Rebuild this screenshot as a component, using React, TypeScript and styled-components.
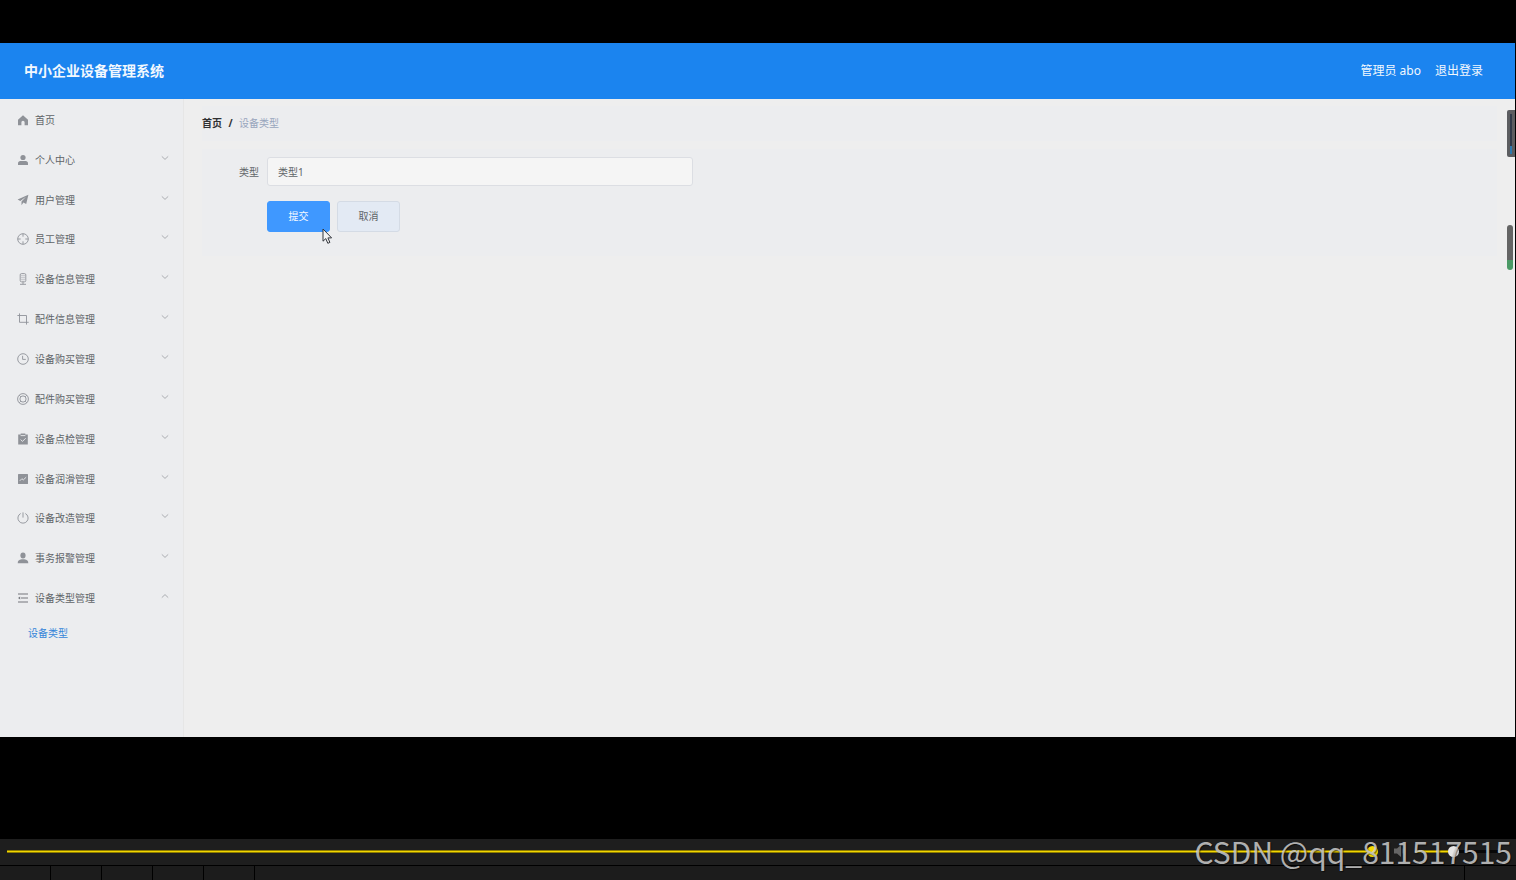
import React, { useState } from 'react';
import styled, { createGlobalStyle } from 'styled-components';

const GlobalStyle = createGlobalStyle`
  *, *::before, *::after { box-sizing: border-box; }
  body {
    margin: 0;
    background: #000;
    font-family: "Noto Sans", "Noto Sans CJK SC", sans-serif;
    font-size: 10px;
    line-height: 16px;
    color: #606468;
  }
  a { color: inherit; text-decoration: none; }
  button, input { font: inherit; color: inherit; margin: 0; }
  ul, ol { list-style: none; margin: 0; padding: 0; }
`;

const Page = styled.div`
  position: relative;
  min-height: 100vh;
  display: flex;
  flex-direction: column;
`;

const Stage = styled.div`
  flex: 1;
  display: flex;
  padding: 43px 1px 102px 0;
`;

const Screen = styled.div`
  position: relative;
  flex: 1;
  display: flex;
  flex-direction: column;
  background: #eeeeee;
`;

const Header = styled.header`
  height: 56px;
  flex: none;
  display: flex;
  align-items: center;
  justify-content: space-between;
  padding: 0 32px 0 24px;
  background: #1b84ef;
  color: #f2f8fe;
`;

const Title = styled.h1`
  margin: 0;
  font-size: 14px;
  line-height: 20px;
  font-weight: 700;
`;

const Account = styled.div`
  display: flex;
  gap: 14px;
  font-size: 12px;
`;

const Body = styled.div`
  flex: 1;
  display: flex;
`;

const Sidebar = styled.nav`
  width: 184px;
  flex: none;
  background: #ecedef;
  border-right: 1px solid #e6e6e6;
`;

const Menu = styled.ul`
  display: grid;
  grid-auto-rows: 1fr;
  height: 519px;
  padding-top: 1px;
`;

const MenuItem = styled.li`
  display: flex;
`;

const MenuButton = styled.button`
  flex: 1;
  display: flex;
  align-items: center;
  gap: 6px;
  padding: 0 14px 0 17px;
  border: 0;
  background: none;
  text-align: left;
  cursor: pointer;
`;

const MenuLabel = styled.span`
  flex: 1;
`;

const MenuIcon = styled.svg`
  width: 12px;
  height: 12px;
  flex: none;
  color: #8f9298;
`;

const Chevron = styled.svg<{ $open?: boolean }>`
  width: 8px;
  height: 8px;
  margin-bottom: 4px;
  color: #9a9da2;
  transform: ${(p) => (p.$open ? 'rotate(180deg)' : 'none')};
`;

const SubLink = styled.a`
  display: block;
  padding: 7px 28px;
  color: #3585d9;
`;

const Content = styled.main`
  flex: 1;
  display: flex;
  flex-direction: column;
  gap: 8px;
  padding: 7px 18px 0;
`;

const Breadcrumb = styled.nav`
  display: flex;
  gap: 6px;
  height: 35px;
  padding-bottom: 2px;
  align-items: center;
  background: #ecedef;
  color: #98a5bd;
`;

const HomeCrumb = styled.a`
  font-weight: 700;
  color: #303133;
`;

const Slash = styled.span`
  width: 5px;
  text-align: center;
  font-weight: 700;
  color: #303133;
`;

const Form = styled.form`
  display: flex;
  flex-direction: column;
  gap: 15px;
  padding: 8px 0 24px;
  background: #ecedef;
`;

const Field = styled.div`
  display: flex;
  align-items: center;
`;

const FieldLabel = styled.label`
  width: 65px;
  padding-right: 8px;
  text-align: right;
`;

const TextInput = styled.input`
  width: 426px;
  height: 29px;
  padding: 0 10px;
  border: 1px solid #dcdee3;
  border-radius: 3px;
  background: #f5f5f5;
  outline: none;
`;

const Actions = styled.div`
  display: flex;
  gap: 7px;
  padding-left: 65px;
`;

const ActionButton = styled.button<{ $primary?: boolean }>`
  width: 63px;
  height: 31px;
  padding: 0 0 2px;
  border: 1px solid ${(p) => (p.$primary ? '#3f98ff' : '#d4dbe5')};
  border-radius: 3px;
  background: ${(p) => (p.$primary ? '#3f98ff' : '#e3eaf4')};
  color: ${(p) => (p.$primary ? '#f4f9ff' : '#606468')};
  cursor: pointer;
`;

const Gauge = styled.div<{ $top: number; $wide?: boolean }>`
  position: absolute;
  top: ${(p) => p.$top}px;
  right: ${(p) => (p.$wide ? 0 : 2)}px;
  width: ${(p) => (p.$wide ? 8 : 6)}px;
  height: ${(p) => (p.$wide ? 47 : 45)}px;
  padding: ${(p) => (p.$wide ? '4px 3px 3px 3px' : '0')};
  display: flex;
  overflow: hidden;
  border-radius: ${(p) => (p.$wide ? '2px 0 0 2px' : '4px')};
  background: #5c5d60;
`;

const GaugeFill = styled.div<{ $tone: string; $rest: string; $level: number }>`
  flex: 1;
  background: linear-gradient(
    to top,
    ${(p) => p.$tone} ${(p) => p.$level}%,
    ${(p) => p.$rest} ${(p) => p.$level}%
  );
`;

const Pointer = styled.svg`
  position: absolute;
  left: 322px;
  top: 185px;
  width: 11px;
  height: 17px;
`;

const Player = styled.footer`
  flex: none;
  display: flex;
  flex-direction: column;
  gap: 1px;
`;

const Controls = styled.div`
  height: 26px;
  display: flex;
  align-items: center;
  padding: 0 18px 2px 7px;
  background: #1e1e1e;
`;

const Range = styled.input<{ $fill: number; $knob: string }>`
  appearance: none;
  width: 83px;
  height: 11px;
  background: linear-gradient(
      to right,
      transparent ${(p) => p.$fill}%,
      #080808 ${(p) => p.$fill}%
    ) center / 100% 3px no-repeat,
    linear-gradient(#8d7c00 1px, #f2d600 1px 2px, #8d7c00 2px) center / 100% 3px no-repeat;

  &::-webkit-slider-thumb {
    appearance: none;
    width: 11px;
    height: 11px;
    border-radius: 50%;
    background: ${(p) => p.$knob};
  }
`;

const SeekRange = styled(Range)`
  flex: 1;
  min-width: 0;
`;

const Speaker = styled.svg`
  width: 14px;
  height: 14px;
  margin: 0 8px 0 15px;
`;

const Cells = styled.div`
  display: grid;
  grid-template-columns: repeat(5, 50px) 1fr 51px;
  gap: 1px;
  height: 14px;
`;

const Cell = styled.div`
  background: #1c1c1c;
`;

const Watermark = styled.div`
  position: absolute;
  right: 4px;
  bottom: 7px;
  font-family: "Noto Sans CJK SC", sans-serif;
  font-size: 30px;
  line-height: 44px;
  font-weight: 400;
  color: rgba(205, 205, 205, 0.85);
  text-shadow: 1px 1px 1px rgba(0, 0, 0, 0.5);
  white-space: nowrap;
  pointer-events: none;
`;

const line = { fill: 'none', stroke: 'currentColor', strokeWidth: 0.9 } as const;

const icons: Record<string, React.ReactNode> = {
  home: <path fill="currentColor" d="M6 1.3 1 5.7V11.2h3.4V8.3a1.6 1.6 0 0 1 3.2 0v2.9H11V5.7Z" />,
  user: (
    <g fill="currentColor">
      <circle cx="6" cy="3.5" r="2.6" />
      <path d="M1 11V9.4C1 8 2 7.1 3.3 7.1h5.4C10 7.1 11 8 11 9.4V11Z" />
    </g>
  ),
  send: <path fill="currentColor" d="M11.4.8.6 5.6l2.7 1.3L9 2.8 4.5 7.5v3.8l1.9-2.7 2.8 1.5Z" />,
  aim: (
    <g {...line}>
      <circle cx="6" cy="6" r="5.3" />
      <path d="M6 .7v3M6 8.3v3M.7 6h3M8.3 6h3" />
    </g>
  ),
  mic: (
    <g {...line}>
      <rect x="3.2" y=".6" width="5.6" height="8.2" rx="1.3" />
      <path d="M6 8.8v2.4M3 11.3h6M4.5 2.7h1M6.5 2.7h1M4.5 4.7h1M6.5 4.7h1M4.5 6.7h1M6.5 6.7h1" />
    </g>
  ),
  crop: <path {...line} d="M2.5.4v8.9h9.2M.4 2.5h9.1v9.1" />,
  clock: (
    <g {...line}>
      <circle cx="6" cy="6" r="5.3" />
      <path d="M5.6 2.8v3.6h3.2" />
    </g>
  ),
  ring: (
    <g {...line}>
      <circle cx="6" cy="6" r="5.4" />
      <circle cx="6" cy="6" r="3.1" />
      <path d="m2.2 2.2 1.6 1.6M9.8 2.2 8.2 3.8M2.2 9.8l1.6-1.6M9.8 9.8 8.2 8.2" />
    </g>
  ),
  clipboard: (
    <g>
      <path fill="currentColor" d="M1.2 1.6h2.5V.6h4.6v1h2.5v9.9H1.2Z" />
      <path d="M3.6 2.6h4.8M3.6 6.6l1.9 1.8 3.2-3.2" fill="none" stroke="#ecedef" strokeWidth=".9" />
    </g>
  ),
  chart: (
    <g>
      <rect x="1" y="1" width="10" height="10" rx=".5" fill="currentColor" />
      <path d="M2.8 7.8 4.900 5.700l1.400 1.200 2.900-2.700" fill="none" stroke="#ecedef" strokeWidth=".9" />
    </g>
  ),
  power: <path {...line} d="M6 .4v5.2M3.700 1.500a5.100 5.100 0 1 0 4.600 0" />,
  person: (
    <g fill="currentColor">
      <ellipse cx="6" cy="3.600" rx="2.600" ry="3" />
      <path d="M.7 11.300c0-2.600 1.200-3.400 4-4h2.600c2.800.6 4 1.400 4 4Z" />
    </g>
  ),
  list: (
    <g {...line}>
      <path d="M1 2h10M4 6h7M1 10h10" stroke="#74777c" strokeWidth="1.1" />
      <path d="M3.200 4.500v3L1 6Z" fill="#74777c" stroke="none" />
    </g>
  ),
};

const menu = [
  { icon: 'user', label: '个人中心' },
  { icon: 'send', label: '用户管理' },
  { icon: 'aim', label: '员工管理' },
  { icon: 'mic', label: '设备信息管理' },
  { icon: 'crop', label: '配件信息管理' },
  { icon: 'clock', label: '设备购买管理' },
  { icon: 'ring', label: '配件购买管理' },
  { icon: 'clipboard', label: '设备点检管理' },
  { icon: 'chart', label: '设备润滑管理' },
  { icon: 'power', label: '设备改造管理' },
  { icon: 'person', label: '事务报警管理' },
  { icon: 'list', label: '设备类型管理', open: true },
];

export default function App() {
  const [type, setType] = useState('类型1');
  const [seek, setSeek] = useState(100);
  const [volume, setVolume] = useState(46);

  return (
    <>
      <GlobalStyle />
      <Page>
        <Stage>
          <Screen>
            <Header>
              <Title>中小企业设备管理系统</Title>
              <Account>
                <span>管理员 abo</span>
                <a href="#logout">退出登录</a>
              </Account>
            </Header>
            <Body>
              <Sidebar>
                <Menu>
                  <MenuItem>
                    <MenuButton as="a" href="#home">
                      <MenuIcon viewBox="0 0 12 12">{icons.home}</MenuIcon>
                      <MenuLabel>首页</MenuLabel>
                    </MenuButton>
                  </MenuItem>
                  {menu.map((item) => (
                    <MenuItem key={item.label}>
                      <MenuButton type="button" aria-expanded={!!item.open}>
                        <MenuIcon viewBox="0 0 12 12">{icons[item.icon]}</MenuIcon>
                        <MenuLabel>{item.label}</MenuLabel>
                        <Chevron viewBox="0 0 8 8" $open={item.open}>
                          <path d="m.8 2.4 3.2 3 3.2-3" fill="none" stroke="currentColor" strokeWidth=".8" />
                        </Chevron>
                      </MenuButton>
                    </MenuItem>
                  ))}
                </Menu>
                <SubLink href="#type">设备类型</SubLink>
              </Sidebar>
              <Content>
                <Breadcrumb>
                  <HomeCrumb href="#home">首页</HomeCrumb>
                  <Slash>/</Slash>
                  <span>设备类型</span>
                </Breadcrumb>
                <Form onSubmit={(e) => e.preventDefault()}>
                  <Field>
                    <FieldLabel htmlFor="type">类型</FieldLabel>
                    <TextInput id="type" value={type} onChange={(e) => setType(e.target.value)} />
                  </Field>
                  <Actions>
                    <ActionButton type="submit" $primary>提交</ActionButton>
                    <ActionButton type="button">取消</ActionButton>
                  </Actions>
                </Form>
              </Content>
            </Body>
            <Gauge $top={67} $wide>
              <GaugeFill $tone="#2d78ad" $rest="#303a49" $level={20} />
            </Gauge>
            <Gauge $top={182}>
              <GaugeFill $tone="#4b9a66" $rest="#646464" $level={23} />
            </Gauge>
            <Pointer viewBox="0 0 11 17">
              <path
                d="M1 1v12.2l2.8-2.6 2 4.7 2.1-.9-2-4.5h3.7Z"
                fill="#f4f4f4"
                stroke="#33363c"
                strokeWidth="1"
              />
            </Pointer>
          </Screen>
        </Stage>
        <Player>
          <Controls>
            <SeekRange
              type="range"
              aria-label="播放进度"
              $fill={seek}
              $knob="#f5db00"
              value={seek}
              onChange={(e) => setSeek(Number(e.target.value))}
            />
            <Speaker viewBox="0 0 14 14">
              <path d="M1 4.500h3L8 1v12L4 9.500H1Z" fill="#666" />
              <path d="M10 4.500v5M12 3v8" stroke="#444" fill="none" />
            </Speaker>
            <Range
              type="range"
              aria-label="音量"
              $fill={volume}
              $knob="#e6e6e6"
              value={volume}
              onChange={(e) => setVolume(Number(e.target.value))}
            />
          </Controls>
          <Cells>
            {[0, 1, 2, 3, 4, 5, 6].map((n) => (
              <Cell key={n} />
            ))}
          </Cells>
        </Player>
        <Watermark>CSDN @qq_811517515</Watermark>
      </Page>
    </>
  );
}
